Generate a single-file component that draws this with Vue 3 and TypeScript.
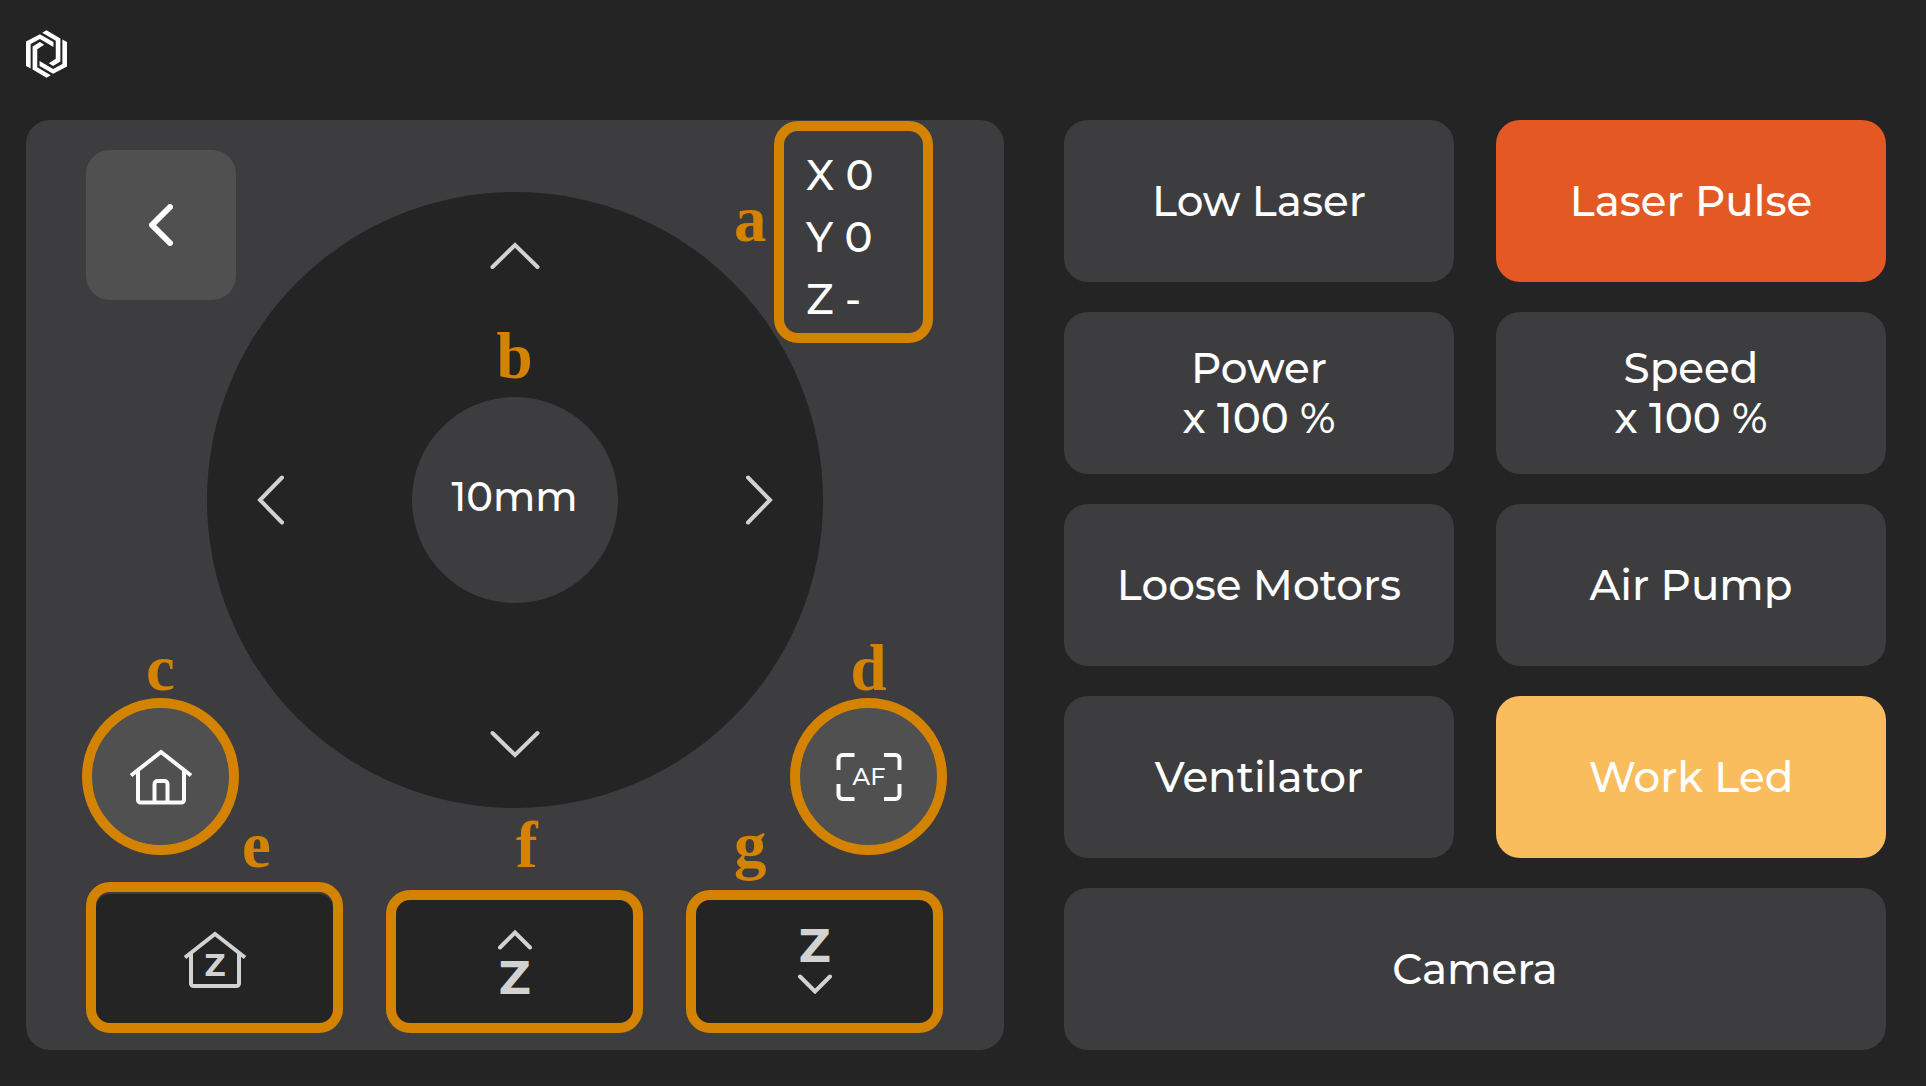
<script setup lang="ts">
import { ref } from 'vue'

interface Action {
  lines: string[]
  tone?: 'danger' | 'warm'
  wide?: boolean
}

const actions: Action[] = [
  { lines: ['Low Laser'] },
  { lines: ['Laser Pulse'], tone: 'danger' },
  { lines: ['Power', 'x 100 %'] },
  { lines: ['Speed', 'x 100 %'] },
  { lines: ['Loose Motors'] },
  { lines: ['Air Pump'] },
  { lines: ['Ventilator'] },
  { lines: ['Work Led'], tone: 'warm' },
  { lines: ['Camera'], wide: true },
]

const position = ref([
  { axis: 'X', value: '0' },
  { axis: 'Y', value: '0' },
  { axis: 'Z', value: '-' },
])
</script>

<template>
  <div class="screen">
    <header class="topbar">
      <svg class="logo" viewBox="78 90 124 144" aria-hidden="true">
        <path d="M78 198V124L120 102L161 126V141L120 117L92 132V206Z" />
        <path d="M98 209V139L120 126L133 134L112 148V202L153 226L140 234Z" />
        <path d="M182 115V185L160 198L147 190L168 176V122L127 98L140 90Z" />
        <path d="M202 126V200L160 222L119 198V183L160 207L188 192V118Z" />
      </svg>
    </header>

    <main class="columns">
      <section class="panel" aria-label="Motion control">
        <div class="stage">
          <div class="dial">
            <button class="arrow up" type="button" aria-label="Move up">
              <svg width="50" height="28" viewBox="0 0 50 28"><path d="M2.500 25L25 3L47.500 25" /></svg>
            </button>
            <button class="arrow left" type="button" aria-label="Move left">
              <svg width="28" height="50" viewBox="0 0 28 50"><path d="M25 2.500L3 25L25 47.500" /></svg>
            </button>
            <button class="step" type="button">10mm</button>
            <button class="arrow right" type="button" aria-label="Move right">
              <svg width="28" height="50" viewBox="0 0 28 50"><path d="M3 2.500L25 25L3 47.500" /></svg>
            </button>
            <button class="arrow down" type="button" aria-label="Move down">
              <svg width="50" height="28" viewBox="0 0 50 28"><path d="M2.500 3L25 25L47.500 3" /></svg>
            </button>
            <span class="callout in-dial">b</span>
          </div>

          <button class="back" type="button" aria-label="Back">
            <svg width="24" height="42" viewBox="0 0 24 42"><path d="M21 3L3 21L21 39" /></svg>
          </button>

          <div class="marked readout-slot">
            <div class="readout">
              <div v-for="row in position" :key="row.axis">{{ row.axis }} {{ row.value }}</div>
            </div>
            <span class="callout beside">a</span>
          </div>

          <div class="marked home-slot">
            <button class="round" type="button" aria-label="Home">
              <svg width="64" height="58" viewBox="0 0 64 58">
                <path d="M2 27.5L32 4L62 27.5" />
                <path d="M9 22V52a2.5 2.5 0 0 0 2.5 2.5H52.5a2.5 2.5 0 0 0 2.5-2.5V22" />
                <path d="M25.5 54.5V36a3 3 0 0 1 3-3H35.5a3 3 0 0 1 3 3V54.5" />
              </svg>
            </button>
            <span class="callout above">c</span>
          </div>

          <div class="marked focus-slot">
            <button class="round" type="button" aria-label="Auto focus">
              <svg width="66" height="50" viewBox="0 0 66 50">
                <path d="M2.5 18V7a4 4 0 0 1 4-4H18.5M48 3H59.5a4 4 0 0 1 4 4V18M63.5 32V43a4 4 0 0 1-4 4H48M18.5 47H6.5a4 4 0 0 1-4-4V32" />
                <text x="33" y="33" class="focus-text">AF</text>
              </svg>
            </button>
            <span class="callout above">d</span>
          </div>
        </div>

        <div class="axis-row">
          <div class="marked">
            <button class="axis tall" type="button" aria-label="Home Z">
              <svg width="64" height="60" viewBox="0 0 64 60">
                <path d="M2 27.5L32 4L62 27.5" />
                <path d="M8 22V53.5a2.5 2.5 0 0 0 2.5 2.5H53.5a2.5 2.5 0 0 0 2.5-2.5V22" />
                <text x="32" y="46" class="home-text">Z</text>
              </svg>
            </button>
            <span class="callout over e">e</span>
          </div>
          <div class="marked">
            <button class="axis" type="button" aria-label="Z up">
              <svg width="36" height="20" viewBox="0 0 36 20"><path d="M3 17.5L18 2.5L33 17.5" /></svg>
              <span class="axis-name">Z</span>
            </button>
            <span class="callout over f">f</span>
          </div>
          <div class="marked">
            <button class="axis" type="button" aria-label="Z down">
              <span class="axis-name">Z</span>
              <svg width="36" height="20" viewBox="0 0 36 20"><path d="M3 2.5L18 17.5L33 2.5" /></svg>
            </button>
            <span class="callout over g">g</span>
          </div>
        </div>
      </section>

      <section class="actions" aria-label="Machine actions">
        <button
          v-for="action in actions"
          :key="action.lines[0]"
          type="button"
          class="action"
          :class="[action.tone, { wide: action.wide }]"
        >
          <span v-for="line in action.lines" :key="line">{{ line }}</span>
        </button>
      </section>
    </main>
  </div>
</template>

<style>
body {
  background: #242424;
}
</style>

<style scoped>
.screen {
  box-sizing: border-box;
  min-height: 100vh;
  padding: 30px 40px 36px 26px;
  background: #242424;
  color: #fff;
  font-family: Montserrat, Inter, sans-serif;
  font-size: 42px;
  font-weight: 500;
  line-height: 50px;
}

.screen *,
.screen *::before {
  box-sizing: border-box;
}

button {
  margin: 0;
  padding: 0;
  border: 0;
  background: none;
  color: inherit;
  font: inherit;
  cursor: pointer;
}

svg {
  display: block;
  fill: none;
  stroke: currentColor;
  stroke-width: 4;
}

.topbar {
  display: flex;
  margin-bottom: 42px;
}

.logo {
  width: 41px;
  height: 48px;
  fill: #fff;
  stroke: none;
}

.columns {
  display: grid;
  grid-template-columns: 978fr 822fr;
  gap: 60px;
}

.panel {
  padding: 0 61px 17px 60px;
  border-radius: 24px;
  background: #3d3d3f;
}

.stage {
  display: grid;
  grid-template-columns: 1fr 1fr;
  grid-template-rows: auto 1fr auto;
  margin: 0 -4px 27px;
}

.dial {
  position: relative;
  display: grid;
  grid-area: 1 / 1 / -1 / -1;
  grid-template-columns: 1fr auto 1fr;
  grid-template-rows: 1fr auto 1fr;
  justify-self: center;
  width: 616px;
  height: 616px;
  margin: 72px 0 47px;
  padding: 50px;
  border-radius: 50%;
  background: #242424;
}

.arrow {
  color: #d2d2d2;
}

.arrow path,
.back path,
.axis > svg > path {
  stroke-linecap: round;
}

.axis.tall > svg > path {
  stroke-linecap: butt;
}

.up {
  grid-area: 1 / 2;
  place-self: start center;
}

.left {
  grid-area: 2 / 1;
  place-self: center start;
}

.right {
  grid-area: 2 / 3;
  place-self: center end;
}

.down {
  grid-area: 3 / 2;
  place-self: end center;
}

.step {
  grid-area: 2 / 2;
  width: 206px;
  height: 206px;
  padding-bottom: 6px;
  border-radius: 50%;
  background: #3d3d3f;
  font-size: 40px;
}

.back {
  display: grid;
  grid-area: 1 / 1;
  place-items: center;
  width: 150px;
  height: 150px;
  margin: 30px 0 0 4px;
  border-radius: 24px;
  background: #505050;
}

.back svg {
  stroke-width: 6;
}

.marked {
  position: relative;
}

.readout-slot {
  grid-area: 1 / 2;
  justify-self: end;
  margin: 1px 14px 0 0;
}

.readout {
  width: 159px;
  padding: 13px 22px 3px;
  border: 10px solid #d38300;
  border-radius: 24px;
  line-height: 62px;
}

.home-slot {
  grid-area: 3 / 1;
  justify-self: start;
}

.focus-slot {
  grid-area: 3 / 2;
  justify-self: end;
}

.round {
  display: grid;
  place-items: center;
  width: 157px;
  height: 157px;
  border: 10px solid #d38300;
  border-radius: 50%;
  background: #505050;
  color: #fafafa;
}

text {
  fill: currentColor;
  stroke: none;
  text-anchor: middle;
}

.focus-text {
  font-size: 24px;
}

.home-text {
  font-size: 31px;
  font-weight: 700;
}

.axis-row {
  display: grid;
  grid-template-columns: repeat(3, 1fr);
  gap: 43px;
  align-items: end;
}

.axis {
  display: flex;
  flex-direction: column;
  align-items: center;
  justify-content: center;
  gap: 12px;
  width: 100%;
  height: 143px;
  border: 10px solid #d38300;
  border-radius: 24px;
  background: #242424;
  color: #d2d2d2;
}

.axis.tall {
  height: 151px;
  padding-top: 4px;
  box-shadow: inset 0 2px #3d3d3f;
}

.axis-name {
  font-size: 47px;
  font-weight: 700;
  line-height: 32px;
}

.callout {
  position: absolute;
  color: #d38300;
  font-family: "Liberation Serif", "Times New Roman", serif;
  font-size: 65px;
  font-weight: 700;
  line-height: 66px;
  text-align: center;
  pointer-events: none;
}

.in-dial {
  top: 131px;
  right: 0;
  left: 0;
}

.beside {
  top: 65px;
  left: -40px;
}

.above {
  top: -63px;
  right: 0;
  left: 0;
}

.over {
  bottom: 155px;
}

.over.e {
  left: 156px;
}

.over.f {
  left: 130px;
}

.over.g {
  left: 48px;
}

.actions {
  display: grid;
  grid-template-columns: 1fr 1fr;
  grid-auto-rows: 1fr;
  gap: 30px 42px;
}

.action {
  display: flex;
  flex-direction: column;
  align-items: center;
  justify-content: center;
  border-radius: 24px;
  background: #3d3d3f;
}

.action.danger {
  background: #e35823;
}

.action.warm {
  background: #f9bd5e;
}

.action.wide {
  grid-column: 1 / -1;
}
</style>
